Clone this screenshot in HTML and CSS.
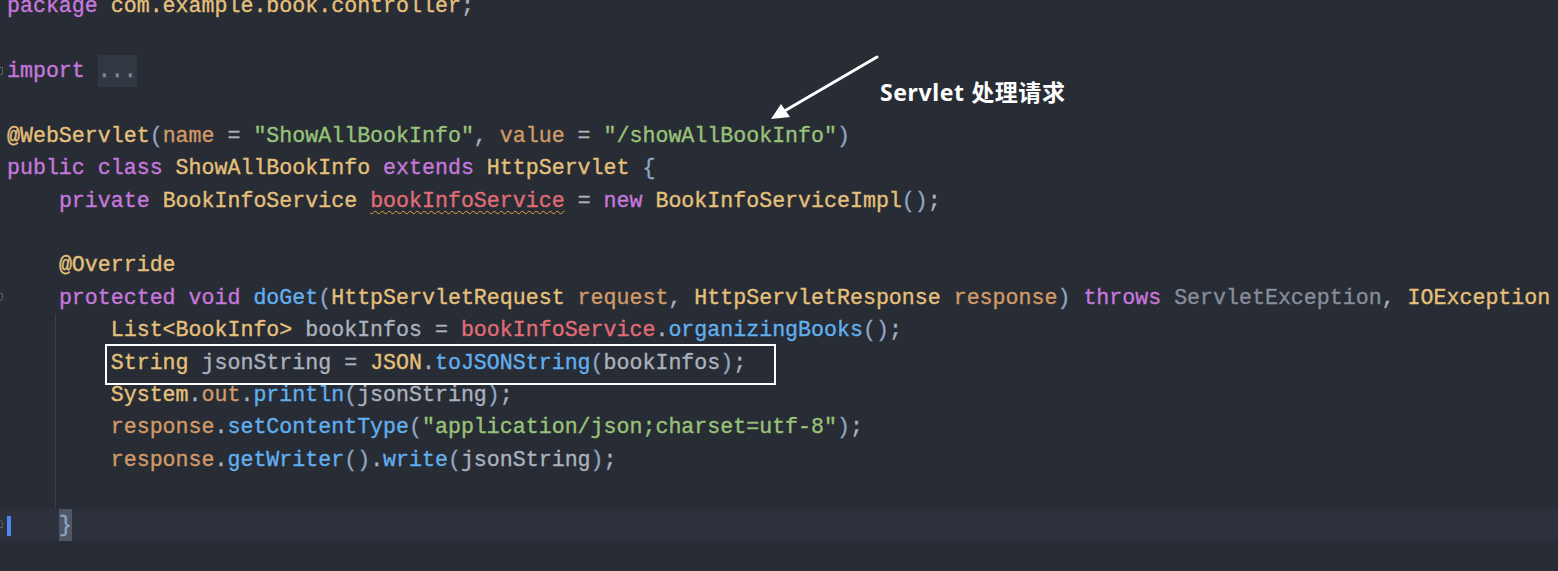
FILE: index.html
```html
<!DOCTYPE html>
<html>
<head>
<meta charset="utf-8">
<link rel="stylesheet" href="styles.css">
</head>
<body>
<div class="editor">
  <div class="code">
    <div class="line"><span class="gut"></span><span class="src"><span class="kw">package</span> <span class="ty">com.example.book.controller</span><span class="tx">;</span></span></div>
    <div class="line"><span class="gut"></span><span class="src"></span></div>
    <div class="line"><span class="gut"><span class="fold fold-sq"></span></span><span class="src"><span class="kw">import</span> <span class="folded">...</span></span></div>
    <div class="line"><span class="gut"></span><span class="src"></span></div>
    <div class="line"><span class="gut"></span><span class="src"><span class="ty">@WebServlet</span><span class="pn">(</span><span class="pa">name</span> <span class="tx">=</span> <span class="st">"ShowAllBookInfo"</span><span class="tx">,</span> <span class="pa">value</span> <span class="tx">=</span> <span class="st">"/showAllBookInfo"</span><span class="pn">)</span></span></div>
    <div class="line"><span class="gut"></span><span class="src"><span class="kw">public class</span> <span class="ty">ShowAllBookInfo</span> <span class="kw">extends</span> <span class="ty">HttpServlet</span> <span class="pn">{</span></span></div>
    <div class="line"><span class="gut"></span><span class="src">    <span class="kw">private</span> <span class="ty">BookInfoService</span> <span class="fd wavy">bookInfoService</span> <span class="tx">=</span> <span class="kw">new</span> <span class="ty">BookInfoServiceImpl</span><span class="pn">()</span><span class="tx">;</span></span></div>
    <div class="line"><span class="gut"></span><span class="src"></span></div>
    <div class="line"><span class="gut"></span><span class="src">    <span class="ty">@Override</span></span></div>
    <div class="line"><span class="gut"><span class="fold fold-sh"></span></span><span class="src">    <span class="kw">protected void</span> <span class="fn">doGet</span><span class="pn">(</span><span class="ty">HttpServletRequest</span> <span class="pa">request</span><span class="tx">,</span> <span class="ty">HttpServletResponse</span> <span class="pa">response</span><span class="pn">)</span> <span class="kw">throws</span> <span class="dim">ServletException</span><span class="tx">,</span> <span class="ty">IOException</span></span></div>
    <div class="guide">
      <div class="line"><span class="gut"></span><span class="src">        <span class="ty">List&lt;BookInfo&gt;</span> <span class="tx">bookInfos =</span> <span class="fd">bookInfoService</span><span class="tx">.</span><span class="fn">organizingBooks</span><span class="pn">()</span><span class="tx">;</span></span></div>
      <div class="line"><span class="gut"></span><span class="src">        <span class="ty">String</span> <span class="tx">jsonString =</span> <span class="ty">JSON</span><span class="tx">.</span><span class="fn">toJSONString</span><span class="pn">(</span><span class="tx">bookInfos</span><span class="pn">)</span><span class="tx">;</span></span></div>
      <div class="line"><span class="gut"></span><span class="src">        <span class="ty">System</span><span class="tx">.</span><span class="pa">out</span><span class="tx">.</span><span class="fn">println</span><span class="pn">(</span><span class="tx">jsonString</span><span class="pn">)</span><span class="tx">;</span></span></div>
      <div class="line"><span class="gut"></span><span class="src">        <span class="pa">response</span><span class="tx">.</span><span class="fn">setContentType</span><span class="pn">(</span><span class="st">"application/json;charset=utf-8"</span><span class="pn">)</span><span class="tx">;</span></span></div>
      <div class="line"><span class="gut"></span><span class="src">        <span class="pa">response</span><span class="tx">.</span><span class="fn">getWriter</span><span class="pn">()</span><span class="tx">.</span><span class="fn">write</span><span class="pn">(</span><span class="tx">jsonString</span><span class="pn">)</span><span class="tx">;</span></span></div>
      <div class="line"><span class="gut"></span><span class="src"></span></div>
    </div>
    <div class="line current"><span class="gut"><span class="fold fold-up"></span></span><span class="src"><span class="caret"></span>    <span class="match">}</span></span></div>
    <div class="line"><span class="gut"></span><span class="src"></span></div>
  </div>

  <div class="highlight-box"></div>

  <svg class="arrow" width="140" height="90" viewBox="0 0 140 90">
    <line x1="136" y1="7" x2="40" y2="63" stroke="#ffffff" stroke-width="3" stroke-linecap="round"/>
    <polygon points="30,69 40,54 49,67" fill="#ffffff"/>
  </svg>
  <div class="note">Servlet 处理请求</div>
</div>
</body>
</html>
```

FILE: styles.css
```css
html, body {
  margin: 0;
  padding: 0;
  background: #282c34;
  overflow: hidden;
}

.editor {
  position: relative;
  width: 1558px;
  height: 571px;
  overflow: hidden;
  background: #282c34;
}

.code {
  margin-top: -10px;
  font-family: "Liberation Mono", "Courier New", monospace;
  font-size: 21.62px;
  color: #abb2bf;
  -webkit-text-stroke: 0.35px currentColor;
}

.line {
  display: flex;
  height: 32.43px;
  line-height: 32.43px;
  white-space: pre;
}

.line.current {
  background: #2c313c;
}

.gut {
  position: relative;
  width: 7px;
  flex: 0 0 7px;
}

.src {
  position: relative;
  display: block;
  flex: 1 1 auto;
  white-space: pre;
}

.guide {
  background: linear-gradient(#3a3f4a, #3a3f4a) no-repeat 55px 0 / 1px 100%;
}

.kw { color: #c678dd; }
.ty { color: #e5c07b; }
.pa { color: #d19a66; }
.st { color: #98c379; }
.fn { color: #61afef; }
.fd { color: #e06c75; }
.tx { color: #abb2bf; }
.pn { color: #8fa6c6; }
.dim { color: #868d99; }

.wavy {
  text-decoration: underline wavy #e0a040;
  text-decoration-thickness: 1px;
  text-underline-offset: 3px;
}

.folded {
  display: inline-block;
  height: 32.43px;
  vertical-align: top;
  background: #323842;
  color: #7f8c98;
}

.match {
  display: inline-block;
  height: 32.43px;
  vertical-align: top;
  background: #4f5766;
  color: #8fa6c6;
}

.caret {
  position: absolute;
  left: 0;
  top: 7px;
  width: 4px;
  height: 20px;
  background: #4d86f5;
}

.fold {
  position: absolute;
  left: -3px;
  top: 11px;
  width: 6px;
  height: 8px;
  border: 1px solid #5a606b;
  box-sizing: border-box;
}

.fold-sq {
  height: 8px;
  top: 12px;
}

.fold-sh {
  border-radius: 0 0 3px 3px;
}

.fold-up {
  border-radius: 3px 3px 0 0;
}

.highlight-box {
  position: absolute;
  left: 105px;
  top: 344px;
  width: 671px;
  height: 41px;
  border: 2px solid #ffffff;
  box-sizing: border-box;
}

.arrow {
  position: absolute;
  left: 741px;
  top: 50px;
}

.note {
  position: absolute;
  left: 880px;
  top: 76px;
  font-family: "Noto Sans", "Noto Sans CJK SC", sans-serif;
  font-weight: 700;
  font-size: 23px;
  letter-spacing: 0.6px;
  line-height: 32px;
  color: #ffffff;
}
```
